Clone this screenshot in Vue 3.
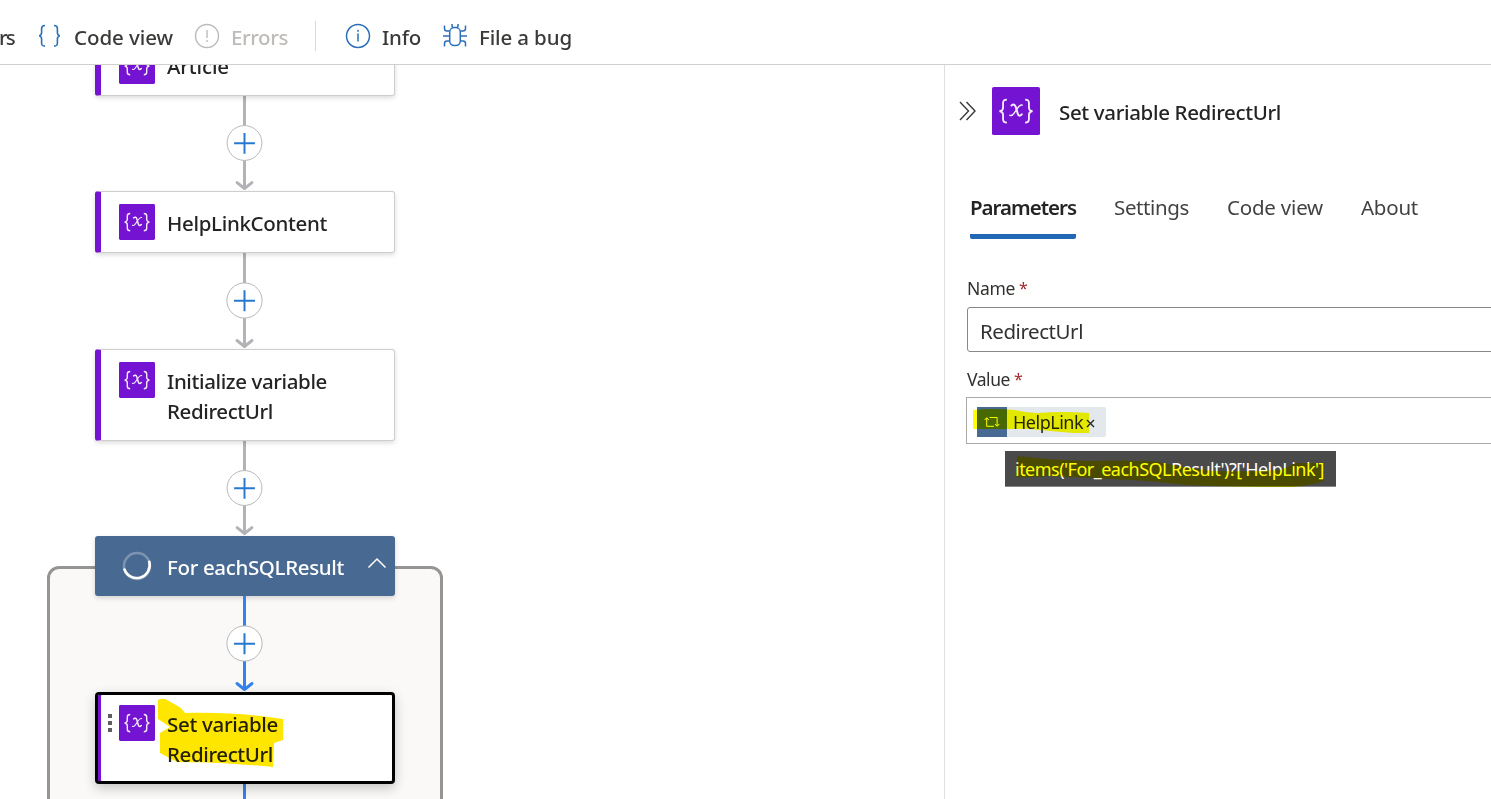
<script setup>
import { h } from 'vue'

// Spreads a label's letters so that it occupies the given advance width.
const vFit = {
  mounted(el, { value }) {
    const natural = el.getBoundingClientRect().width
    el.style.letterSpacing = (value - natural) / el.textContent.length + 'px'
  },
}

const VariableIcon = () =>
  h('svg', { viewBox: '0 0 36 36', class: 'variable-icon' }, [
    h('rect', { width: 36, height: 36, rx: 1.4, fill: '#7413d1' }),
    h('path', {
      d: 'M11.200 9.500C9 9.500 8.300 10.400 8.300 12v3.300c0 1.600-.8 2.500-2.700 2.800 1.900.3 2.700 1.200 2.700 2.700v3.400c0 1.700.7 2.500 2.900 2.500M24.800 9.500c2.200 0 2.900.9 2.900 2.500v3.300c0 1.600.8 2.500 2.700 2.800-1.900.3-2.700 1.200-2.700 2.700v3.400c0 1.700-.7 2.500-2.900 2.500',
      fill: 'none', stroke: '#f4eafc', 'stroke-width': 1.4,
    }),
    h('path', {
      d: 'M14.600 13.900c1.500-1.200 2.600-.8 3.200 1l1.600 5.300c.5 1.700 1.600 1.800 2.900.3',
      fill: 'none', stroke: '#f4eafc', 'stroke-width': 1.5, 'stroke-linecap': 'round',
    }),
    h('path', {
      d: 'M22.700 13.600c-1.300-.5-2.300.4-3.800 2.600l-2.300 3.400c-1.100 1.700-2.100 2.200-3.200 1.600',
      fill: 'none', stroke: '#f4eafc', 'stroke-width': 1.05, 'stroke-linecap': 'round',
    }),
  ])

const Edge = (props) =>
  h('svg', { viewBox: '0 0 40 96', width: 40, height: 96, class: 'edge' }, [
    h('path', { d: 'M19.500 0V94', stroke: props.color, 'stroke-width': 3, fill: 'none' }),
    h('path', { d: 'M12 87.500l7.500 6 7.500-6', stroke: props.color, 'stroke-width': 3, fill: 'none', 'stroke-linecap': 'round', 'stroke-linejoin': 'round' }),
    h('circle', { cx: 19.5, cy: 47.5, r: 17.6, fill: '#fff', stroke: '#b9b8b8', 'stroke-width': 1 }),
    h('path', { d: 'M9 47.800h21M19.500 37.300v21', stroke: '#2779cf', 'stroke-width': 2, fill: 'none' }),
  ])
Edge.props = ['color']
</script>

<template>
  <div class="app">
    <header class="toolbar">
      <div class="tool cut"><span v-fit="15">rs</span></div>
      <div class="tool code">
        <svg width="24" height="26" viewBox="0 0 24 26" fill="none" stroke="#2a6fb8" stroke-width="1.600"><path d="M7 2.500C4 2.500 3.600 3.600 3.600 5.500v4c0 2-.8 3-2.400 3.300 1.600.4 2.400 1.300 2.400 3.300v4c0 2 .4 3 3.400 3M16 2.500c3 0 3.400 1.100 3.400 3v4c0 2 .8 3 2.400 3.300-1.600.4-2.400 1.300-2.400 3.300v4c0 2-.4 3-3.400 3" /></svg>
        <span v-fit="99">Code view</span>
      </div>
      <div class="tool errors">
        <svg width="26" height="26" viewBox="0 0 26 26" fill="none" stroke="#bdbbb9" stroke-width="1.400"><circle cx="13" cy="13" r="11.500" /><path d="M13 7v8M13 17v2" /></svg>
        <span v-fit="57">Errors</span>
      </div>
      <i class="separator"></i>
      <div class="tool info">
        <svg width="26" height="26" viewBox="0 0 26 26" fill="none" stroke="#2a6fb8" stroke-width="1.500"><circle cx="13" cy="13" r="11.500" /><path d="M13 10.500v8M13 6.800v2" /></svg>
        <span v-fit="39">Info</span>
      </div>
      <div class="tool bug">
        <svg width="26" height="26" viewBox="0 0 26 26" fill="none" stroke="#2a6fb8" stroke-width="1.500"><rect x="7.700" y="4.600" width="10.600" height="18" rx="4.500" /><path d="M10 1v1.500q0 2 1.500 2M16 1v1.500q0 2-1.500 2M2.500 2.500v3q0 2.500 2.500 2.500h2.700M23.500 2.500v3q0 2.500-2.500 2.500h-2.700M1 13h6.700M18.300 13H25M2.500 23.500v-3Q2.500 18 5 18h2.700M23.500 23.500v-3Q23.500 18 21 18h-2.700" /></svg>
        <span v-fit="93">File a bug</span>
      </div>
    </header>

    <main class="workspace">
      <section class="canvas">
        <div class="scope"></div>
        <div class="column">
          <article class="card first"><VariableIcon /><div class="title"><span v-fit="62">Article</span></div></article>
          <Edge color="#b3b2b6" class="short" />
          <article class="card single"><VariableIcon /><div class="title"><span v-fit="160">HelpLinkContent</span></div></article>
          <Edge color="#b3b2b6" />
          <article class="card double"><VariableIcon /><div class="title"><span v-fit="160">Initialize variable</span><span v-fit="106">RedirectUrl</span></div></article>
          <Edge color="#b3b2b6" class="short" />
          <article class="loop">
            <svg width="30" height="30" viewBox="0 0 30 30" fill="none" stroke-width="2.600"><circle cx="15" cy="15" r="13" stroke="#7d93b0" /><path d="M27.300 10.800A13 13 0 0 1 2.500 18.500" stroke="#fff" stroke-linecap="round" /></svg>
            <span v-fit="177" class="loop-name">For eachSQLResult</span>
            <svg width="20" height="12" viewBox="0 0 20 12" fill="none" stroke="#fff" stroke-width="1.500"><path d="M1.500 10.500L10 2l8.500 8.500" /></svg>
          </article>
          <Edge color="#3483ec" />
          <article class="card double selected">
            <svg class="grip" width="4" height="18" viewBox="0 0 4 18" fill="#605e5c"><path d="M0 0h4v4H0zM0 7h4v4H0zM0 14h4v4H0z" /></svg>
            <VariableIcon />
            <div class="title"><span v-fit="111">Set variable</span><span v-fit="106">RedirectUrl</span></div>
            <svg class="marker card-marker" width="128" height="72" viewBox="0 0 128 72"><path d="M0 2q5-3 11 1l12 7 4 5c34-1 66 1 98 6v21l-9 3-1 24q-48-5-96-5L2 55V35l10-6L0 21z" fill="#ffe600" /></svg>
          </article>
          <i class="tail"></i>
        </div>
      </section>

      <aside class="panel">
        <div class="heading">
          <svg width="18" height="20" viewBox="0 0 18 20" fill="none" stroke="#3b3a39" stroke-width="1.400"><path d="M1 1l8.500 9L1 19M7.500 1l8.500 9-8.500 9" /></svg>
          <VariableIcon />
          <h1><span v-fit="222">Set variable RedirectUrl</span></h1>
        </div>
        <nav class="tabs">
          <div class="tab active"><span v-fit="106">Parameters</span></div>
          <div class="tab settings"><span v-fit="75">Settings</span></div>
          <div class="tab view"><span v-fit="96">Code view</span></div>
          <div class="tab about"><span v-fit="57">About</span></div>
        </nav>
        <label class="label"><span v-fit="48">Name</span><b>*</b></label>
        <div class="input name"><span v-fit="103">RedirectUrl</span></div>
        <label class="label second"><span v-fit="43">Value</span><b>*</b></label>
        <div class="input value">
          <div class="token">
            <div class="token-icon">
              <svg width="16" height="12" viewBox="0 0 16 12" fill="none" stroke="#fff" stroke-width="1"><path d="M2.700 2v8.300H10M.6 4l2.100-2.300L4.800 4M5.500 1.500h7.600v8.600M11 8l2.100 2.300L15.200 8" /></svg>
            </div>
            <span v-fit="70" class="token-name">HelpLink</span>
            <svg width="9" height="9" viewBox="0 0 9 9" stroke="#242424" stroke-width="1.400"><path d="M1 1l7 7M8 1L1 8" /></svg>
          </div>
          <svg class="marker token-marker" width="120" height="28" viewBox="0 0 120 28"><path d="M0 2Q20 0 42 2q12 3 22 3 27-2 52 0v20h-15Q75 23 57 21H0z" fill="#ff0" /></svg>
        </div>
        <div class="tooltip">
          <span v-fit="309">items('For_eachSQLResult')?['HelpLink']</span>
          <svg class="marker tip-marker" width="310" height="32" viewBox="0 0 310 32"><path d="M1 1Q34 5 73 6q32-1 63 0 17 3 32 6l28 4q38 1 68-1l16-7h28v18q-15 5-33 6-58 0-105-2-28-4-55-5-54-3-82-4Q14 23 0 22z" fill="#ff0" /></svg>
        </div>
      </aside>
    </main>
  </div>
</template>

<style>
body { margin: 0; background: #fff; }
</style>

<style scoped>
.app { width: 1491px; height: 799px; overflow: hidden; background: #fff; font-family: "Noto Sans", "Open Sans", sans-serif; font-size: 20.5px; color: #242424; }
.app * { box-sizing: border-box; }
svg { display: block; flex: none; }
span { display: inline-block; white-space: nowrap; }
.toolbar { height: 65px; border-bottom: 1px solid #d2d0ce; display: flex; align-items: center; padding-top: 8px; }
.tool { display: flex; align-items: center; height: 30px; font-weight: 500; color: #3b3a39; flex: none; }
.tool span { line-height: 30px; padding-top: 1px; }
.cut { width: 38px; }
.cut span { margin-left: -1px; }
.code { width: 156px; }
.code span { margin-left: 12px; }
.errors { width: 121px; color: #bebbb8; }
.errors span, .info span { margin-left: 11px; }
.separator { width: 1px; height: 30px; background: #dbd9d7; }
.info { margin-left: 29px; width: 97px; }
.bug span { margin-left: 11px; }
.workspace { display: flex; height: 734px; }
.canvas { width: 944px; position: relative; overflow: hidden; flex: none; }
.scope { position: absolute; left: 47px; top: 501px; width: 396px; height: 300px; border: 3px solid #979593; border-radius: 12px; background: #faf9f8; }
.column { position: relative; display: flex; flex-direction: column; align-items: center; width: 300px; margin: -30px 0 0 95px; }
.card { position: relative; width: 300px; flex: none; display: flex; align-items: flex-start; gap: 12px; padding: 12px 0 0 18px; background: #fff; border: 1px solid #d0cecd; border-left: 6px solid #7413d1; border-radius: 3px; box-shadow: 0 2px 5px rgba(0,0,0,.14); }
.variable-icon { width: 36px; height: 36px; }
.title { display: flex; flex-direction: column; align-items: flex-start; font-weight: 550; line-height: 30px; padding-top: 4px; }
.first { height: 61px; }
.first .title { padding-top: 3px; }
.single { height: 62px; }
.double { height: 92px; }
.edge { flex: none; height: 96px; }
.edge.short { height: 95px; }
.loop { width: 300px; height: 60px; flex: none; background: #486991; border-radius: 3px; color: #fff; display: flex; align-items: center; padding-left: 27px; box-shadow: 0 2px 5px rgba(0,0,0,.16); }
.loop-name { font-weight: 550; line-height: 30px; margin: 1px 23px 0 15px; }
.loop > svg:last-child { margin-top: -6px; }
.selected { border: 3px solid #000; border-radius: 4px; padding: 10px 0 0 10px; gap: 7px; box-shadow: inset 3px 0 #7413d1, 0 4px 12px rgba(0,0,0,.22); }
.selected .grip { margin-top: 9px; }
.selected .title { margin-left: 5px; }
.marker { position: absolute; mix-blend-mode: multiply; }
.card-marker { left: 60px; top: 3px; }
.tail { width: 3px; height: 20px; background: #3483ec; margin-right: 1px; }
.panel { flex: 1; min-width: 0; overflow: hidden; border-left: 1px solid #e1dfdd; }
.heading { height: 92px; display: flex; align-items: center; padding-left: 14px; }
.heading .variable-icon { width: 48px; height: 48px; margin: 0 19px 0 15px; }
h1 { margin: 1px 0 0; font-size: 20.5px; line-height: 30px; font-weight: 550; }
.tabs { display: flex; height: 82px; padding: 34px 0 0 25px; color: #424242; }
.tab { height: 48px; line-height: 32px; flex: none; }
.tab.active { width: 106px; border-radius: 2px; color: #242424; font-weight: 600; background: linear-gradient(#2169b5, #2169b5) 0 bottom / 100% 5px no-repeat; }
.settings { margin-left: 38px; width: 76px; }
.view { margin-left: 37px; width: 97px; }
.about { margin-left: 37px; }
.label { display: flex; gap: 4px; margin: 37px 0 0 22px; height: 26px; font-size: 17.5px; line-height: 24px; color: #323130; }
.label b { color: #a4262c; font-weight: 400; font-size: 16px; }
.input { border: 1px solid #8a8886; background: #fff; width: 560px; display: flex; align-items: center; }
.name { margin: 5px 0 0 22px; height: 45px; border-radius: 3px; padding: 2px 0 0 12px; color: #323130; }
.second { margin-top: 15px; }
.value { position: relative; margin: 4px 0 0 21px; height: 47px; border-color: #acaaa8; padding: 2px 0 0 10px; }
.token { display: flex; align-items: center; width: 129px; height: 30px; background: #e3e8ed; border-radius: 2px; font-size: 18px; }
.token-icon { width: 30px; height: 30px; background: #486991; display: flex; align-items: center; justify-content: center; margin-right: 6px; }
.token-name { line-height: 28px; padding-top: 1px; }
.token > svg { margin: 3px 0 0 3px; }
.token-marker { left: 6px; top: 10px; }
.tooltip { position: relative; margin: 7px 0 0 60px; width: 331px; height: 36px; background: #4a4a4a; color: #fff; padding: 3px 0 0 10px; font-size: 18px; line-height: 30px; border-bottom: 1px solid #85858a; }
.tip-marker { left: 11px; top: 4px; }
</style>
